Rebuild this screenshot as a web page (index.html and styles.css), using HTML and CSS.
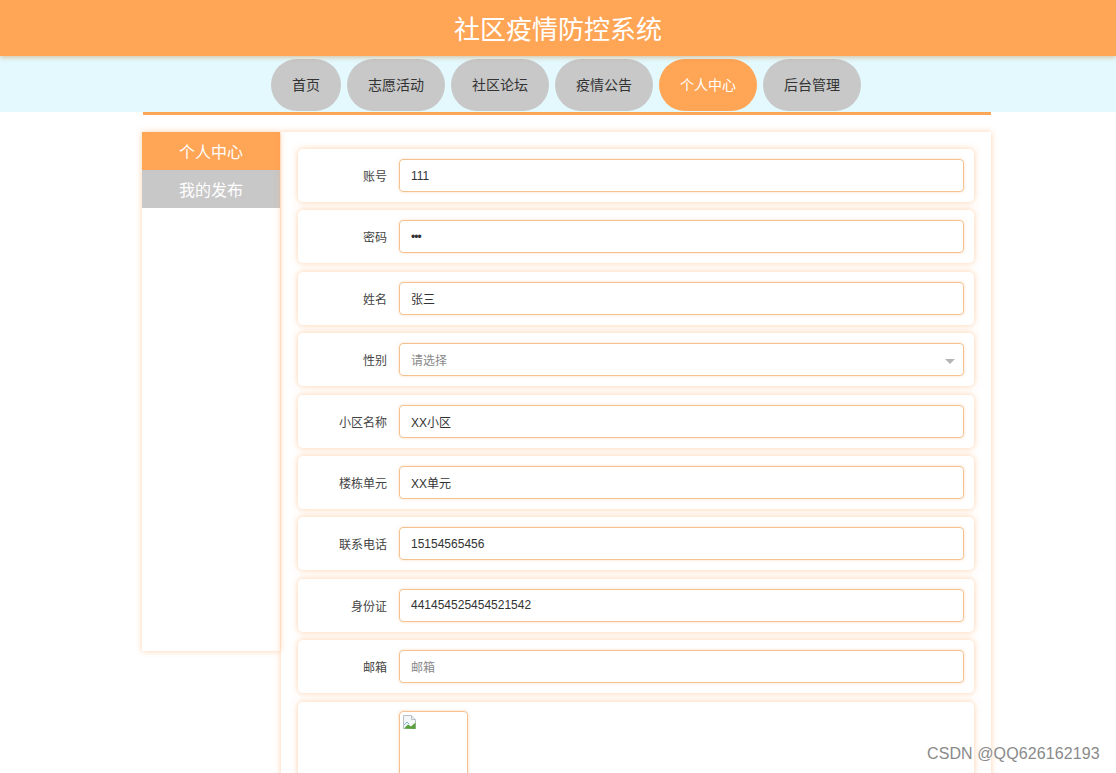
FILE: index.html
```html
<!DOCTYPE html>
<html lang="zh">
<head>
<meta charset="utf-8">
<title>社区疫情防控系统</title>
<link rel="stylesheet" href="styles.css">
</head>
<body>
<header class="top">
  <h1 class="title">社区疫情防控系统</h1>
</header>
<nav class="navbar">
  <div class="nav-inner">
    <a class="pill">首页</a>
    <a class="pill">志愿活动</a>
    <a class="pill">社区论坛</a>
    <a class="pill">疫情公告</a>
    <a class="pill active">个人中心</a>
    <a class="pill">后台管理</a>
  </div>
</nav>
<main class="container">
  <aside class="side">
    <div class="side-item active">个人中心</div>
    <div class="side-item">我的发布</div>
  </aside>
  <section class="panel">
    <div class="row"><label class="lbl">账号</label><div class="field">111</div></div>
    <div class="row"><label class="lbl">密码</label><div class="field dots">•••</div></div>
    <div class="row"><label class="lbl">姓名</label><div class="field">张三</div></div>
    <div class="row"><label class="lbl">性别</label><div class="field select ph">请选择<span class="caret"></span></div></div>
    <div class="row"><label class="lbl">小区名称</label><div class="field">XX小区</div></div>
    <div class="row"><label class="lbl">楼栋单元</label><div class="field">XX单元</div></div>
    <div class="row"><label class="lbl">联系电话</label><div class="field">15154565456</div></div>
    <div class="row"><label class="lbl">身份证</label><div class="field">441454525454521542</div></div>
    <div class="row"><label class="lbl">邮箱</label><div class="field ph">邮箱</div></div>
    <div class="row img-row"><label class="lbl"></label>
      <div class="img-box">
        <svg class="broken" width="16" height="16" viewBox="0 0 16 16">
          <path d="M1.5 1.5h8l4 4v9h-12z" fill="#f4f6f8" stroke="#b9c0c8"/>
          <path d="M9.5 1.5v4h4" fill="#e6eaee" stroke="#b9c0c8"/>
          <path d="M2 14.5l4-4 3 2 4.5-4v6.5z" fill="#5aa03c"/>
          <path d="M2 11l3-3 2 2" fill="none" stroke="#7fb0e0"/>
        </svg>
      </div>
    </div>
  </section>
</main>
<div class="watermark">CSDN @QQ626162193</div>
</body>
</html>
```
FILE: styles.css
```css
* { box-sizing: border-box; }
html, body { margin: 0; padding: 0; }
body {
  background: #fff;
  font-family: "Noto Sans CJK SC", "Microsoft YaHei", "Liberation Sans", sans-serif;
  color: #333;
  height: 773px;
  overflow: hidden;
  position: relative;
}
.top {
  height: 56px;
  background: #ffa556;
  display: flex;
  align-items: center;
  justify-content: center;
  box-shadow: 0 2px 4px rgba(200, 120, 40, 0.35);
  position: relative;
  z-index: 2;
}
.title {
  margin: 0;
  font-size: 26px;
  font-weight: 400;
  color: #fff;
  line-height: 1;
  letter-spacing: 0;
}
.navbar {
  background: #e3f9fd;
  height: 56px;
}
.nav-inner {
  width: 848px;
  margin-left: 142px;
  display: flex;
  justify-content: center;
  gap: 6px;
  padding-top: 3px;
}
.pill {
  height: 52px;
  padding: 0 21px 2px;
  border-radius: 26px / 26px;
  background: #c8c8c8;
  color: #333;
  font-size: 14px;
  display: flex;
  align-items: center;
  cursor: pointer;
}
.pill.active {
  background: #ffa556;
  color: #fff;
}
.container {
  width: 848px;
  margin-left: 143px;
  border-top: 3px solid #ffa556;
  padding-top: 17px;
  display: flex;
  align-items: flex-start;
}
.side {
  width: 138px;
  height: 519px;
  margin-left: -1px;
  box-shadow: 0 0 6px rgba(255, 150, 70, 0.45);
  background: #fff;
  flex: none;
}
.side-item {
  height: 38px;
  background: #c8c8c8;
  color: #fff;
  font-size: 16px;
  display: flex;
  align-items: center;
  justify-content: center;
}
.side-item.active { background: #ffa556; }
.panel {
  flex: 1;
  margin-left: 1px;
  padding: 17px 17px 0 17px;
  box-shadow: 0 0 6px rgba(255, 150, 70, 0.45);
  min-height: 700px;
  display: flex;
  flex-direction: column;
  gap: 8.4px;
}
.row {
  display: flex;
  align-items: center;
  height: 53px;
  padding: 0 10px 0 0;
  border-radius: 5px;
  box-shadow: 0 0 6px rgba(255, 160, 80, 0.5);
  background: #fff;
  flex: none;
}
.lbl {
  width: 89px;
  text-align: right;
  font-size: 12px;
  color: #444;
  margin-right: 12px;
  flex: none;
}
.field {
  flex: 1;
  height: 33px;
  border: 1px solid #f6c190;
  border-radius: 4px;
  box-shadow: 0 0 3px rgba(255, 160, 80, 0.35);
  font-size: 12px;
  font-family: "Liberation Sans", "Noto Sans CJK SC", sans-serif;
  color: #333;
  padding: 0 11px;
  display: flex;
  align-items: center;
  position: relative;
}
.field.ph { color: #888; }
.field.dots { font-size: 12px; letter-spacing: -1px; }
.caret {
  position: absolute;
  right: 8px;
  top: 15px;
  width: 0;
  height: 0;
  border-left: 5px solid transparent;
  border-right: 5px solid transparent;
  border-top: 5px solid #b5b5b5;
}
.img-row {
  align-items: flex-start;
  height: 80px;
  padding-top: 9px;
}
.img-box {
  width: 69px;
  height: 70px;
  border: 1px solid #f6c190;
  border-radius: 4px;
  box-shadow: 0 0 3px rgba(255, 160, 80, 0.45);
  padding: 2px 0 0 2px;
}
.broken { display: block; }
.watermark {
  position: absolute;
  left: 927px;
  top: 745px;
  font-family: "Liberation Sans", "DejaVu Sans", sans-serif;
  font-size: 16px;
  color: #8a8a8a;
  letter-spacing: 0.1px;
  text-shadow: 0 0 2px #fff;
}
```
